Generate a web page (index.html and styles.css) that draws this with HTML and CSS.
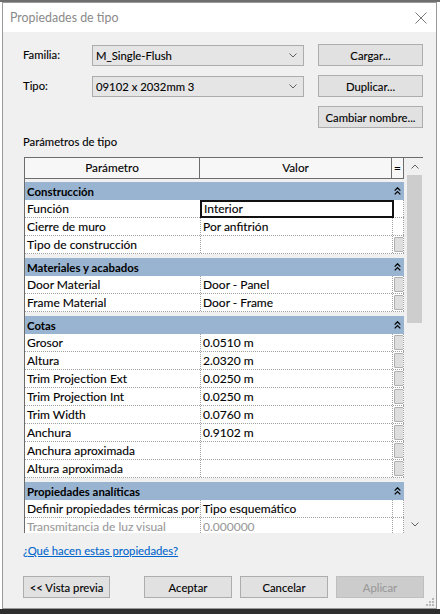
FILE: index.html
```html
<!DOCTYPE html>
<html lang="es">
<head>
<meta charset="utf-8">
<title>Propiedades de tipo</title>
<link rel="stylesheet" href="styles.css">
</head>
<body>
<div class="top-strip"></div>
<div class="main">
  <div class="dialog">
    <div class="titlebar">
      <span class="title">Propiedades de tipo</span>
      <svg class="close" width="12" height="12" viewBox="0 0 12 12"><path d="M0.5 0.5 L11.5 11.5 M11.5 0.5 L0.5 11.5" stroke="#7a7a7a" stroke-width="1" fill="none"/></svg>
    </div>
    <div class="content">
      <div class="form">
        <span class="lbl">Familia:</span>
        <div class="select"><span>M_Single-Flush</span><svg width="8" height="5" viewBox="0 0 8 5"><path d="M0.5 0.5 L4 4 L7.5 0.5" stroke="#606060" fill="none"/></svg></div>
        <button class="btn">Cargar...</button>
        <span class="lbl">Tipo:</span>
        <div class="select"><span>09102 x 2032mm 3</span><svg width="8" height="5" viewBox="0 0 8 5"><path d="M0.5 0.5 L4 4 L7.5 0.5" stroke="#606060" fill="none"/></svg></div>
        <button class="btn">Duplicar...</button>
        <span></span><span></span>
        <button class="btn">Cambiar nombre...</button>
      </div>
      <div class="section-label">Parámetros de tipo</div>
      <div class="table">
        <div class="grid">
          <div class="thead">
            <div class="th">Parámetro</div>
            <div class="th">Valor</div>
            <div class="th">=</div>
          </div>
          <div class="tbody">
            <div class="group">
              <div class="ghead"><span>Construcción</span><svg class="dchev" width="7" height="8" viewBox="0 0 7 8"><path d="M0.7 3.6 L3.5 0.8 L6.3 3.6 M0.7 7.4 L3.5 4.6 L6.3 7.4" stroke="#000" stroke-width="1.3" fill="none"/></svg></div>
              <div class="row"><div class="c p">Función</div><div class="c v edit">Interior</div><div class="c e"></div></div>
              <div class="row"><div class="c p">Cierre de muro</div><div class="c v">Por anfitrión</div><div class="c e"></div></div>
              <div class="row"><div class="c p">Tipo de construcción</div><div class="c v"></div><div class="c e"><i class="mini"></i></div></div>
            </div>
            <div class="group">
              <div class="ghead"><span>Materiales y acabados</span><svg class="dchev" width="7" height="8" viewBox="0 0 7 8"><path d="M0.7 3.6 L3.5 0.8 L6.3 3.6 M0.7 7.4 L3.5 4.6 L6.3 7.4" stroke="#000" stroke-width="1.3" fill="none"/></svg></div>
              <div class="row"><div class="c p">Door Material</div><div class="c v">Door - Panel</div><div class="c e"><i class="mini"></i></div></div>
              <div class="row"><div class="c p">Frame Material</div><div class="c v">Door - Frame</div><div class="c e"><i class="mini"></i></div></div>
            </div>
            <div class="group">
              <div class="ghead"><span>Cotas</span><svg class="dchev" width="7" height="8" viewBox="0 0 7 8"><path d="M0.7 3.6 L3.5 0.8 L6.3 3.6 M0.7 7.4 L3.5 4.6 L6.3 7.4" stroke="#000" stroke-width="1.3" fill="none"/></svg></div>
              <div class="row"><div class="c p">Grosor</div><div class="c v">0.0510 m</div><div class="c e"><i class="mini"></i></div></div>
              <div class="row"><div class="c p">Altura</div><div class="c v">2.0320 m</div><div class="c e"><i class="mini"></i></div></div>
              <div class="row"><div class="c p">Trim Projection Ext</div><div class="c v">0.0250 m</div><div class="c e"><i class="mini"></i></div></div>
              <div class="row"><div class="c p">Trim Projection Int</div><div class="c v">0.0250 m</div><div class="c e"><i class="mini"></i></div></div>
              <div class="row"><div class="c p">Trim Width</div><div class="c v">0.0760 m</div><div class="c e"><i class="mini"></i></div></div>
              <div class="row"><div class="c p">Anchura</div><div class="c v">0.9102 m</div><div class="c e"><i class="mini"></i></div></div>
              <div class="row"><div class="c p">Anchura aproximada</div><div class="c v"></div><div class="c e"><i class="mini"></i></div></div>
              <div class="row"><div class="c p">Altura aproximada</div><div class="c v"></div><div class="c e"><i class="mini"></i></div></div>
            </div>
            <div class="group">
              <div class="ghead"><span>Propiedades analíticas</span><svg class="dchev" width="7" height="8" viewBox="0 0 7 8"><path d="M0.7 3.6 L3.5 0.8 L6.3 3.6 M0.7 7.4 L3.5 4.6 L6.3 7.4" stroke="#000" stroke-width="1.3" fill="none"/></svg></div>
              <div class="row"><div class="c p">Definir propiedades térmicas por</div><div class="c v">Tipo esquemático</div><div class="c e"></div></div>
              <div class="row dim"><div class="c p">Transmitancia de luz visual</div><div class="c v">0.000000</div><div class="c e"></div></div>
            </div>
          </div>
        </div>
        <div class="vscroll">
          <div class="sbtn"><svg width="8" height="5" viewBox="0 0 8 5"><path d="M0.5 4.5 L4 1 L7.5 4.5" stroke="#606060" fill="none"/></svg></div>
          <div class="thumb"></div>
          <div class="track"></div>
          <div class="sbtn"><svg width="8" height="5" viewBox="0 0 8 5"><path d="M0.5 0.5 L4 4 L7.5 0.5" stroke="#606060" fill="none"/></svg></div>
        </div>
      </div>
      <a class="help" href="#">¿Qué hacen estas propiedades?</a>
      <div class="buttons">
        <button class="btn">&lt;&lt; Vista previa</button>
        <button class="btn push">Aceptar</button>
        <button class="btn">Cancelar</button>
        <button class="btn disabled">Aplicar</button>
      </div>
    </div>
    <svg class="grip" width="8" height="8" viewBox="0 0 8 8"><g fill="#b8b8b8"><rect x="6" y="0" width="2" height="2"/><rect x="3" y="3" width="2" height="2"/><rect x="6" y="3" width="2" height="2"/><rect x="0" y="6" width="2" height="2"/><rect x="3" y="6" width="2" height="2"/><rect x="6" y="6" width="2" height="2"/></g></svg>
  </div>
</div>
<div class="bottom-strip"></div>
</body>
</html>
```

FILE: styles.css
```css
* { box-sizing: border-box; }
html, body { margin: 0; padding: 0; }
body {
  width: 440px;
  height: 614px;
  overflow: hidden;
  background: #ffffff;
  font-family: Lato, "Noto Sans", sans-serif;
  font-size: 11.3px;
  color: #000;
  -webkit-text-stroke: 0.1px currentColor;
}
.top-strip { height: 2px; background: #6e6e6e; }
.main { padding: 0 3px 0 2px; }
.bottom-strip { height: 5px; background: #2e2e2e; }

.dialog {
  position: relative;
  width: 435px;
  height: 607px;
  border: 1px solid #9a9a9a;
  background: #f0f0f0;
  display: flex;
  flex-direction: column;
}
.titlebar {
  height: 29px;
  background: #ffffff;
  display: flex;
  align-items: center;
  justify-content: space-between;
  padding: 0 9px 0 7px;
  flex: none;
}
.title { font-size: 12.4px; color: #8a8a8a; -webkit-text-stroke: 0; }
.close { margin-top: 1px; }

.content { padding: 12px 0 0 20px; display: flex; flex-direction: column; }

.form {
  display: grid;
  grid-template-columns: 55px 212px 105px;
  grid-auto-rows: 22px;
  column-gap: 14px;
  row-gap: 9px;
  align-items: center;
}
.lbl { line-height: 16px; }
.select {
  height: 21px;
  background: #e5e5e5;
  border: 1px solid #acacac;
  display: flex;
  align-items: center;
  justify-content: space-between;
  padding: 0 6px 0 3px;
}
.btn {
  font-family: inherit;
  font-size: 11.3px;
  height: 22px;
  background: #e1e1e1;
  border: 1px solid #adadad;
  color: #000;
  padding: 0;
  margin: 0;
  white-space: nowrap;
}
.btn.disabled { background: #cccccc; border-color: #bfbfbf; color: #9a9a9a; }

.section-label { margin-top: 6px; line-height: 16px; }

.table {
  margin-top: 7px;
  margin-left: 1px;
  width: 399px;
  height: 376px;
  border-top: 1px solid #6c6c6c;
  border-left: 1px solid #6c6c6c;
  display: flex;
}
.grid { width: 379px; display: flex; flex-direction: column; }
.thead {
  height: 21px;
  display: grid;
  grid-template-columns: 175px 192px 12px;
  background: #f7f7f7;
  border-bottom: 1px solid #6c6c6c;
  flex: none;
}
.th {
  text-align: center;
  line-height: 20px;
  border-right: 1px solid #6c6c6c;
  font-size: 11.8px;
}
.tbody { flex: 1; overflow: hidden; padding-top: 3px; }
.group + .group { margin-top: 4px; }
.ghead {
  height: 18px;
  background: #99b4d1;
  display: flex;
  align-items: center;
  justify-content: space-between;
  padding: 0 3px 0 2px;
  font-weight: bold;
  font-size: 11.4px;
  -webkit-text-stroke: 0;
}
.row {
  height: 18px;
  display: grid;
  grid-template-columns: 176px 192px 11px;
  background: #fff;
  border-bottom: 1px dotted #a0a0a0;
}
.c {
  font-size: 12px;
  line-height: 17px;
  white-space: nowrap;
  overflow: hidden;
  border-right: 1px dotted #a0a0a0;
  padding-left: 2px;
}
.c.v { padding-left: 2px; }
.c.e { padding: 1px 0 0 1px; }
.c.edit { border: 2px solid #111; margin: 0 -1px -1px -1px; line-height: 13px; padding-left: 2px; position: relative; }
.row.dim .c { color: #9a9a9a; }
.mini {
  display: block;
  width: 10px;
  height: 15px;
  background: #dedede;
  border: 1px solid #b0b0b0;
  border-radius: 1px;
}

.vscroll {
  width: 17px;
  margin-left: 2px;
  background: #f0f0f0;
  display: flex;
  flex-direction: column;
}
.sbtn { height: 17px; display: flex; align-items: center; justify-content: center; flex: none; }
.thumb { height: 148px; margin: 0 1px; background: #cdcdcd; flex: none; }
.track { flex: 1; }

.help {
  margin-top: 10px;
  line-height: 16px;
  color: #0066cc;
  text-decoration: underline;
  align-self: flex-start;
}
.buttons { margin-top: 17px; display: flex; gap: 8px; }
.buttons .btn { width: 88px; }
.buttons .btn:first-child { width: 87px; }
.buttons .push { margin-left: 26px; }

.grip { position: absolute; right: 2px; bottom: 2px; }
```
